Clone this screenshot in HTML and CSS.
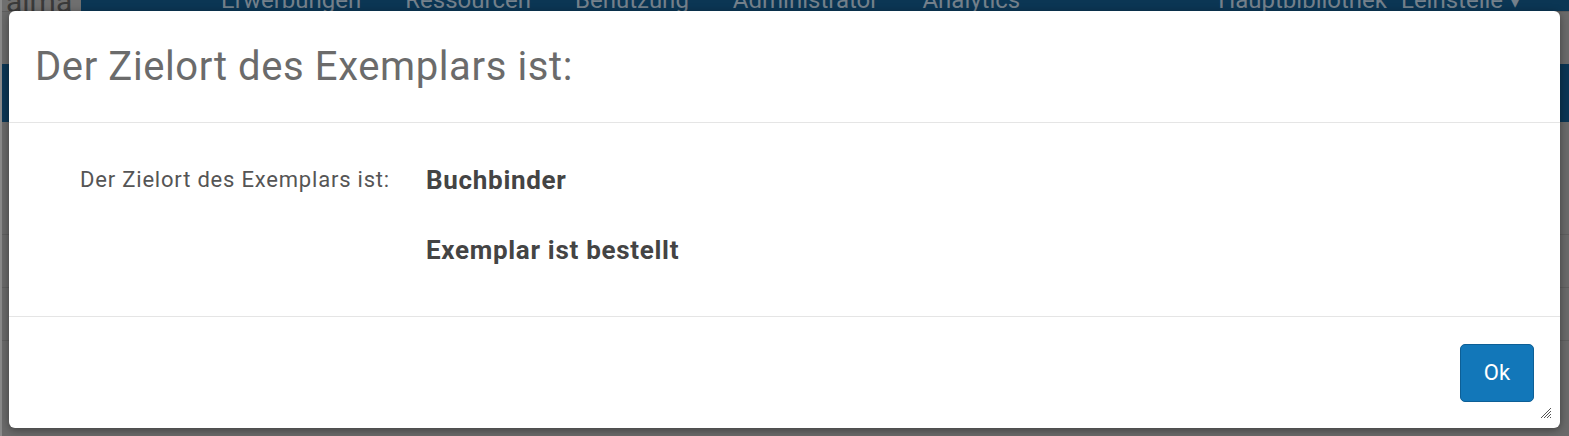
FILE: index.html
```html
<!DOCTYPE html>
<html lang="de">
<head>
  <meta charset="UTF-8">
  <title>Zielort des Exemplars</title>
  <link rel="stylesheet" href="styles.css">
</head>
<body>
  <!-- page behind the dialog, dimmed -->
  <div class="page">
    <div class="topbar">
      <div class="logo">alma</div>
      <nav class="menu">
        <span class="menu-item first">Erwerbungen</span>
        <span class="menu-item">Ressourcen</span>
        <span class="menu-item">Benutzung</span>
        <span class="menu-item">Administrator</span>
        <span class="menu-item">Analytics</span>
      </nav>
      <div class="location">
        <span>Hauptbibliothek</span>
        <span>Leihstelle &#9662;</span>
      </div>
    </div>
    <div class="subbar"></div>
    <div class="rows">
      <div class="row"></div>
      <div class="row"></div>
      <div class="row"></div>
    </div>
  </div>

  <div class="modal">
    <div class="modal-header">
      <h1>Der Zielort des Exemplars ist:</h1>
    </div>
    <div class="modal-body">
      <div class="field">
        <div class="field-label">Der Zielort des Exemplars ist:</div>
        <div class="field-values">
          <div class="value">Buchbinder</div>
          <div class="value">Exemplar ist bestellt</div>
        </div>
      </div>
    </div>
    <div class="modal-footer">
      <button class="btn-ok">Ok</button>
    </div>
    <svg class="resize" width="12" height="12" viewBox="0 0 12 12">
      <path d="M11 1 L1 11 M11 4 L4 11 M11 7 L7 11 M11 10 L10 11" stroke="#555" stroke-width="1"/>
    </svg>
  </div>
</body>
</html>
```

FILE: styles.css
```css
body {
  margin: 0;
  width: 1569px;
  height: 436px;
  overflow: hidden;
  background-color: #6a6a6a;
  font-family: Roboto, "Liberation Sans", sans-serif;
  position: relative;
}

.page {
  height: 100%;
  border-left: 2px solid #8a8a8a;
  box-sizing: border-box;
}

.topbar {
  height: 11px;
  display: flex;
  background-color: #6f6f6f;
  overflow: hidden;
  border-bottom: 1px solid #5e5e5e;
}

.logo {
  width: 75px;
  color: #3a3a3a;
  font-size: 30px;
  line-height: 4px;
  padding-left: 4px;
}

.menu {
  flex: 1;
  display: flex;
  background-color: #0b3654;
  color: #74808b;
  font-size: 24px;
  line-height: 0;
  padding-left: 140px;
}

.menu-item {
  margin-right: 44px;
}

.location {
  display: flex;
  gap: 14px;
  background-color: #0b3654;
  color: #74808b;
  font-size: 24px;
  line-height: 0;
  padding-right: 48px;
}

.subbar {
  height: 58px;
  margin-top: 52px;
  background-color: #0b3654;
}

.rows {
  margin-top: 60px;
}

.row {
  height: 52px;
  border-bottom: 1px solid #5f5f5f;
}

.modal {
  position: absolute;
  top: 11px;
  left: 9px;
  width: 1551px;
  height: 417px;
  background-color: #fff;
  border-radius: 6px;
  box-shadow: 0 2px 8px rgba(0, 0, 0, 0.4);
  display: flex;
  flex-direction: column;
}

.modal-header {
  height: 111px;
  border-bottom: 1px solid #e5e5e5;
  display: flex;
  align-items: center;
  padding-left: 26px;
}

.modal-header h1 {
  margin: 0;
  font-size: 40px;
  letter-spacing: 0.6px;
  font-weight: 400;
  color: #6b6b6b;
}

.modal-body {
  height: 194px;
  border-bottom: 1px solid #e5e5e5;
  padding-top: 44px;
  box-sizing: border-box;
}

.field {
  display: flex;
}

.field-label {
  width: 417px;
  text-align: right;
  font-size: 22px;
  letter-spacing: 0.8px;
  color: #555;
  line-height: 26px;
  padding-right: 36px;
  box-sizing: border-box;
}

.field-values {
  display: flex;
  flex-direction: column;
  gap: 44px;
}

.value {
  font-size: 26px;
  letter-spacing: 0.7px;
  font-weight: 700;
  color: #444;
  line-height: 26px;
}

.modal-footer {
  flex: 1;
  display: flex;
  justify-content: flex-end;
  align-items: center;
  padding-right: 26px;
}

.btn-ok {
  width: 74px;
  height: 58px;
  background-color: #1277b9;
  border: 1px solid #0d5f96;
  border-radius: 5px;
  color: #fff;
  font-family: Roboto, "Liberation Sans", sans-serif;
  font-size: 22px;
  cursor: pointer;
}

.resize {
  position: absolute;
  right: 8px;
  bottom: 9px;
}
```
